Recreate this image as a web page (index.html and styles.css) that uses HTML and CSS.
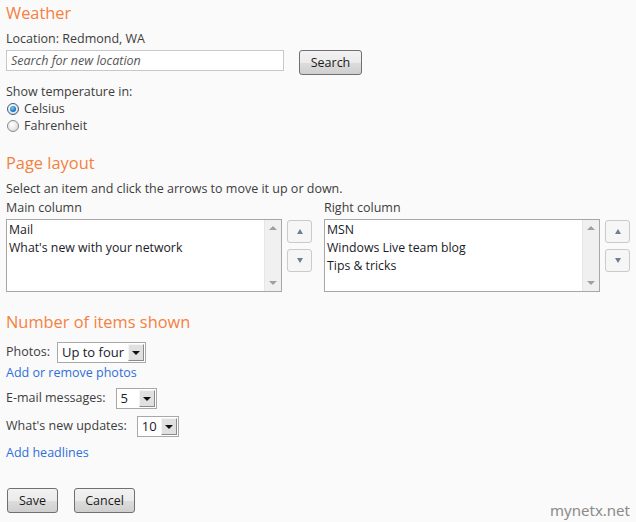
FILE: index.html
```html
<!DOCTYPE html>
<html>
<head>
<meta charset="utf-8">
<link rel="stylesheet" href="styles.css">
</head>
<body>
<div class="page">
  <section class="sec weather">
    <h2 class="head">Weather</h2>
    <div class="line">Location: Redmond, WA</div>
    <div class="search-row">
      <div class="field">Search for new location</div>
      <div class="btn search">Search</div>
    </div>
    <div class="line temp">Show temperature in:</div>
    <div class="radio"><span class="rb on"></span>Celsius</div>
    <div class="radio"><span class="rb"></span>Fahrenheit</div>
  </section>

  <section class="sec layout">
    <h2 class="head">Page layout</h2>
    <div class="line intro">Select an item and click the arrows to move it up or down.</div>
    <div class="cols">
      <div class="col">
        <div class="line">Main column</div>
        <div class="list-row">
          <div class="listbox">
            <div class="items">
              <div class="item">Mail</div>
              <div class="item">What's new with your network</div>
            </div>
            <div class="sbar"><span class="sup"></span><span class="sdn"></span></div>
          </div>
          <div class="arrows">
            <div class="abtn"><span class="tri up"></span></div>
            <div class="abtn"><span class="tri dn"></span></div>
          </div>
        </div>
      </div>
      <div class="col">
        <div class="line">Right column</div>
        <div class="list-row">
          <div class="listbox">
            <div class="items">
              <div class="item">MSN</div>
              <div class="item">Windows Live team blog</div>
              <div class="item">Tips &amp; tricks</div>
            </div>
            <div class="sbar"><span class="sup"></span><span class="sdn"></span></div>
          </div>
          <div class="arrows">
            <div class="abtn"><span class="tri up"></span></div>
            <div class="abtn"><span class="tri dn"></span></div>
          </div>
        </div>
      </div>
    </div>
  </section>

  <section class="sec items-sec">
    <h2 class="head">Number of items shown</h2>
    <div class="opt photos">Photos: <span class="select w-photos"><span class="val">Up to four</span><span class="dd"></span></span></div>
    <a class="link l1" href="#">Add or remove photos</a>
    <div class="opt mail">E-mail messages: <span class="select w-mail"><span class="val">5</span><span class="dd"></span></span></div>
    <div class="opt news">What's new updates: <span class="select w-news"><span class="val">10</span><span class="dd"></span></span></div>
    <a class="link l2" href="#">Add headlines</a>
  </section>

  <div class="actions">
    <div class="btn save">Save</div>
    <div class="btn cancel">Cancel</div>
  </div>
</div>
<div class="mark">mynetx.net</div>
</body>
</html>
```

FILE: styles.css
```css
html, body { height: 100%; }
body {
  margin: 0;
  background: #fafafa;
  font-family: "Open Sans", "Noto Sans", sans-serif;
  font-size: 12.5px;
  line-height: 16px;
  color: #3d3d3d;
  position: relative;
  overflow: hidden;
}
.page { padding: 0 6px; }
.sec { display: flex; flex-direction: column; align-items: flex-start; }
.head {
  margin: 0;
  font-weight: normal;
  font-size: 16.4px;
  line-height: 24px;
  color: #f4813f;
}
.weather .head { margin-top: 1px; }
.line { height: 16px; }
.weather .line { margin-top: 6px; }
.search-row { display: flex; gap: 15px; margin-top: 3px; }
.field {
  width: 272px;
  height: 19px;
  border: 1px solid #c8c8c8;
  background: #fff;
  font-style: italic;
  color: #555;
  line-height: 19px;
  padding-left: 4px;
  font-size: 12.5px;
}
.btn {
  box-sizing: border-box;
  height: 25px;
  border: 1px solid #707070;
  border-radius: 3px;
  background: linear-gradient(#f2f2f2 0%, #ebebeb 50%, #dddddd 51%, #cfcfcf 100%);
  color: #1a1a1a;
  text-align: center;
  line-height: 23px;
  font-size: 12.5px;
}
.search { width: 63px; height: 25px; }
.weather .temp { margin-top: 9px; }
.radio { display: flex; align-items: center; height: 17px; gap: 5px; }
.rb {
  box-sizing: border-box;
  width: 12px; height: 12px;
  border-radius: 50%;
  border: 1px solid #8a8a8a;
  background: radial-gradient(circle at 40% 35%, #ffffff 0%, #e6e6e6 60%, #cfcfcf 100%);
  margin-left: 1px;
  position: relative;
}
.rb.on { border-color: #3c5a78; }
.rb.on::after {
  content: "";
  position: absolute;
  left: 2px; top: 2px;
  width: 6px; height: 6px;
  border-radius: 50%;
  background: radial-gradient(circle at 40% 35%, #6fd0ff 0%, #1a78c2 60%, #0d4c86 100%);
}

.layout { margin-top: 17px; }
.layout .intro { margin-top: 6px; }
.cols { display: grid; grid-template-columns: 318px 312px; margin-top: 3px; }
.col .line { height: 16px; }
.list-row { display: flex; gap: 5px; margin-top: 3px; }
.listbox {
  box-sizing: border-box;
  width: 276px;
  height: 73px;
  border: 1px solid #a7a7a7;
  background: #fff;
  display: flex;
}
.items { flex: 1; padding: 1px 0 0 2px; color: #1a1a28; }
.item { height: 18px; line-height: 18px; font-size: 12.3px; }
.sbar {
  width: 16px;
  background: #f0f0f0;
  border-left: 1px solid #e6e6e6;
  position: relative;
}
.sup, .sdn {
  position: absolute;
  left: 4px;
  width: 0; height: 0;
  border-left: 4px solid transparent;
  border-right: 4px solid transparent;
}
.sup { top: 6px; border-bottom: 4px solid #a0a0a0; }
.sdn { bottom: 6px; border-top: 4px solid #a0a0a0; }
.arrows { display: flex; flex-direction: column; gap: 6px; margin-top: 1px; }
.abtn {
  box-sizing: border-box;
  width: 25px; height: 23px;
  border: 1px solid #cacaca;
  border-radius: 3px;
  background: #f6f6f6;
  display: flex; align-items: center; justify-content: center;
}
.tri { width: 0; height: 0; border-left: 3px solid transparent; border-right: 3px solid transparent; }
.tri.up { border-bottom: 5px solid #6f7f95; }
.tri.dn { border-top: 5px solid #6f7f95; }

.items-sec { margin-top: 18px; }
.opt { display: flex; align-items: center; gap: 7px; height: 22px; }
.photos { margin-top: 7px; }
.select {
  box-sizing: border-box;
  height: 21px;
  border: 1px solid #a8a8a8;
  background: #fff;
  display: flex; align-items: center;
  justify-content: space-between;
  padding: 0 1px 0 4px;
  color: #1a1a28;
  font-size: 13px;
}
.w-photos { width: 89px; }
.w-mail { width: 41px; margin-left: 3px; }
.w-news { width: 42px; margin-left: 3px; }
.dd {
  box-sizing: border-box;
  width: 16px; height: 17px;
  background: #e0e0e0;
  border: 1px solid #8a8a8a;
  border-top-color: #f4f4f4;
  border-left-color: #f4f4f4;
  position: relative;
}
.dd::after {
  content: "";
  position: absolute;
  left: 3px; top: 6px;
  border-left: 4px solid transparent;
  border-right: 4px solid transparent;
  border-top: 4px solid #111;
}
.link { color: #2f6fd8; text-decoration: none; height: 16px; display: block; }
.l1 { margin-top: 2px; }
.mail { margin-top: 6px; }
.news { margin-top: 6px; }
.l2 { margin-top: 8px; }

.actions { display: flex; gap: 16px; margin-top: 27px; }
.save { width: 51px; height: 25px; margin-left: 1px; }
.cancel { width: 61px; height: 25px; }

.mark {
  position: absolute;
  right: 6px;
  bottom: 4px;
  font-family: "Noto Sans", sans-serif;
  font-size: 15px;
  color: #8a8a8a;
}
```
